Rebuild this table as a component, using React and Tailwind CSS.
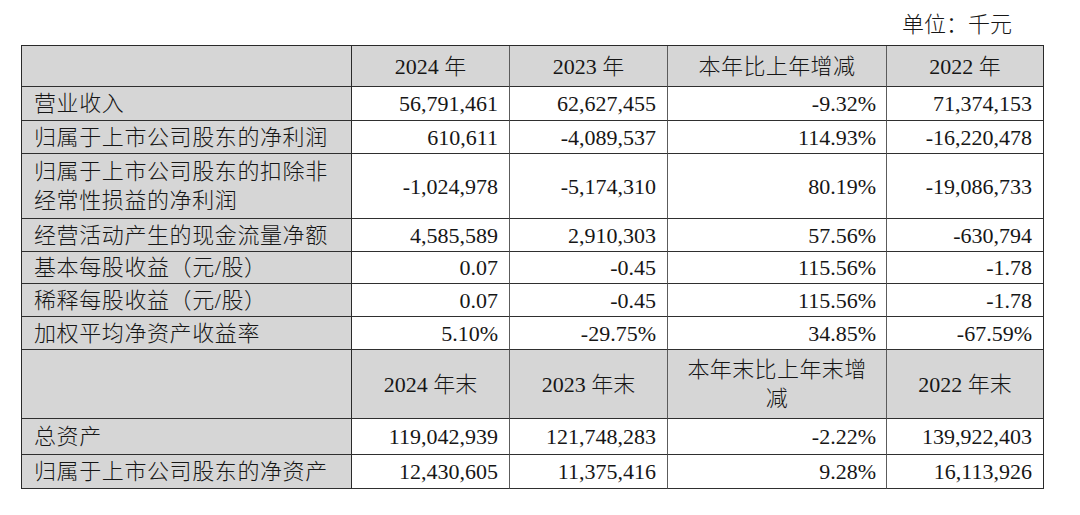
import React from "react";

const cols = ["w-[330px]", "w-[158px]", "w-[158px]", "w-[219px]", "w-[157px]"];

const rows = [
  { type: "head", h: "h-[41px]", cells: ["", "2024 年", "2023 年", "本年比上年增减", "2022 年"] },
  { h: "h-[34px]", cells: ["营业收入", "56,791,461", "62,627,455", "-9.32%", "71,374,153"] },
  { h: "h-[33px]", cells: ["归属于上市公司股东的净利润", "610,611", "-4,089,537", "114.93%", "-16,220,478"] },
  {
    h: "h-[65px]",
    cells: [
      <>归属于上市公司股东的扣除非<br />经常性损益的净利润</>,
      "-1,024,978",
      "-5,174,310",
      "80.19%",
      "-19,086,733",
    ],
  },
  { h: "h-[33px]", cells: ["经营活动产生的现金流量净额", "4,585,589", "2,910,303", "57.56%", "-630,794"] },
  { h: "h-[32px]", cells: ["基本每股收益（元/股）", "0.07", "-0.45", "115.56%", "-1.78"] },
  { h: "h-[33px]", cells: ["稀释每股收益（元/股）", "0.07", "-0.45", "115.56%", "-1.78"] },
  { h: "h-[33px]", cells: ["加权平均净资产收益率", "5.10%", "-29.75%", "34.85%", "-67.59%"] },
  {
    type: "head",
    h: "h-[69px]",
    cells: ["", "2024 年末", "2023 年末", <>本年末比上年末增<br />减</>, "2022 年末"],
  },
  { h: "h-[36px]", cells: ["总资产", "119,042,939", "121,748,283", "-2.22%", "139,922,403"] },
  { h: "h-[34px]", cells: ["归属于上市公司股东的净资产", "12,430,605", "11,375,416", "9.28%", "16,113,926"] },
];

const Cell = ({ i, head, children }) => {
  const width = cols[i];
  // inner verticals between the number columns are a bit lighter
  const rightBorder = i === 0 || i === 4 ? "border-r-[#2a2a2a]" : "border-r-[#5c5c5c]";
  const bg = head || i === 0 ? "bg-[#d6d6d6]" : "bg-white";
  let align;
  if (head) align = "justify-center text-center";
  else if (i === 0) align = "justify-start text-left pl-[12px] tracking-[0.6px]";
  else if (i === 3) align = "justify-end text-right pr-[10px]";
  else align = "justify-end text-right pr-[11px]";
  return (
    <div
      className={`${width} ${bg} ${align} ${rightBorder} flex items-center border-r border-b border-b-[#2f2f2f] leading-[29px] shrink-0`}
    >
      <span className={head && i === 3 ? "tracking-[0.4px]" : ""}>{children}</span>
    </div>
  );
};

export default function App() {
  return (
    <div
      className="w-[1080px] h-[515px] bg-white text-[#161616] text-[22px] font-light"
      style={{ fontFamily: '"Liberation Serif", "Noto Sans CJK SC", serif' }}
    >
      <div className="flex justify-end pr-[68px] pt-[10px] h-[45px] leading-[29px]">单位：千元</div>
      <div className="ml-[21px] w-[1023px] border-t border-l border-[#2a2a2a]">
        {rows.map((r, ri) => (
          <div key={ri} className={`flex ${r.h}`}>
            {r.cells.map((c, ci) => (
              <Cell key={ci} i={ci} head={r.type === "head"}>
                {c}
              </Cell>
            ))}
          </div>
        ))}
      </div>
    </div>
  );
}
